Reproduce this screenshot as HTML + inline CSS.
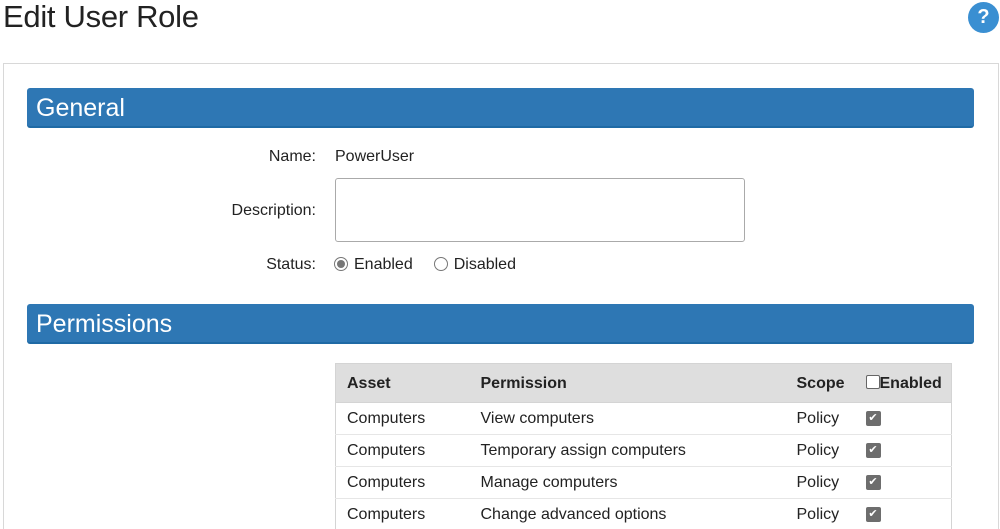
<!DOCTYPE html>
<html><head><style>
*{box-sizing:border-box;margin:0;padding:0}
html,body{width:1000px;height:529px;overflow:hidden}
body{background:#fff;font-family:"Liberation Sans",sans-serif;color:#222;position:relative}
.a{position:absolute}
h1{position:absolute;left:3px;top:-1px;font-weight:normal;font-size:31px;color:#222;letter-spacing:-0.3px}
.help{left:968px;top:2px;width:31px;height:31px;border-radius:50%;background:#3a8fd2;color:#fff;font-weight:bold;font-size:20px;text-align:center;line-height:31px}
.panel{left:3px;top:63px;width:996px;height:466px;border:1px solid #d8d8d8;border-bottom:none}
.bar{left:27px;width:947px;height:40px;background:#2e77b4;border-radius:3px;border-bottom:2px solid #1f6aa5;color:#fff;font-size:25px;padding-left:9px;line-height:40px}
.lbl{width:316px;text-align:right;font-size:16px;color:#222}
.t{font-size:16px}
table{position:absolute;left:335px;top:363px;width:617px;border-collapse:collapse;font-size:16px;border-left:1px solid #d4d4d4;border-right:1px solid #d4d4d4}
th{background:#dedede;text-align:left;height:39px;font-weight:bold;padding-left:11px;padding-top:2px;border:1px solid #d4d4d4;border-left:none;border-right:none}
td{height:32px;padding-left:11px;padding-top:1px;border-bottom:1px solid #e6e6e6}
.cb{display:inline-block;width:15px;height:15px;background:#6d6d6d;border-radius:2px;color:#fff;font-size:11px;line-height:15px;text-align:center;vertical-align:middle}
.radio{display:inline-block;width:14px;height:14px;border:1px solid #777;border-radius:50%;vertical-align:-2px;margin-right:6px;position:relative;background:#fff}
.radio.on::after{content:"";position:absolute;left:2px;top:2px;width:8px;height:8px;border-radius:50%;background:#777}
</style></head><body>
<h1>Edit User Role</h1>
<div class="a help">?</div>
<div class="a panel"></div>
<div class="a bar" style="top:88px">General</div>
<div class="a lbl" style="top:148px">Name:</div>
<div class="a t" style="left:335px;top:148px">PowerUser</div>
<div class="a lbl" style="top:202px">Description:</div>
<div class="a" style="left:335px;top:178px;width:410px;height:64px;border:1px solid #aaa;border-radius:3px"></div>
<div class="a lbl" style="top:256px">Status:</div>
<div class="a t" style="left:334px;top:256px"><span class="radio on"></span>Enabled<span style="display:inline-block;width:21px"></span><span class="radio"></span>Disabled</div>
<div class="a bar" style="top:304px">Permissions</div>
<table>
<tr><th style="width:134px">Asset</th><th style="width:316px">Permission</th><th style="width:70px;padding-left:11px">Scope</th><th style="padding-left:10px"><span style="display:inline-block;width:14px;height:14px;border:1px solid #666;border-radius:2px;vertical-align:-1px;background:#fff"></span>Enabled</th></tr>
<tr><td>Computers</td><td>View computers</td><td>Policy</td><td style="padding-left:10px"><span class="cb">✔</span></td></tr>
<tr><td>Computers</td><td>Temporary assign computers</td><td>Policy</td><td style="padding-left:10px"><span class="cb">✔</span></td></tr>
<tr><td>Computers</td><td>Manage computers</td><td>Policy</td><td style="padding-left:10px"><span class="cb">✔</span></td></tr>
<tr><td>Computers</td><td>Change advanced options</td><td>Policy</td><td style="padding-left:10px"><span class="cb">✔</span></td></tr>
</table>
</body></html>
